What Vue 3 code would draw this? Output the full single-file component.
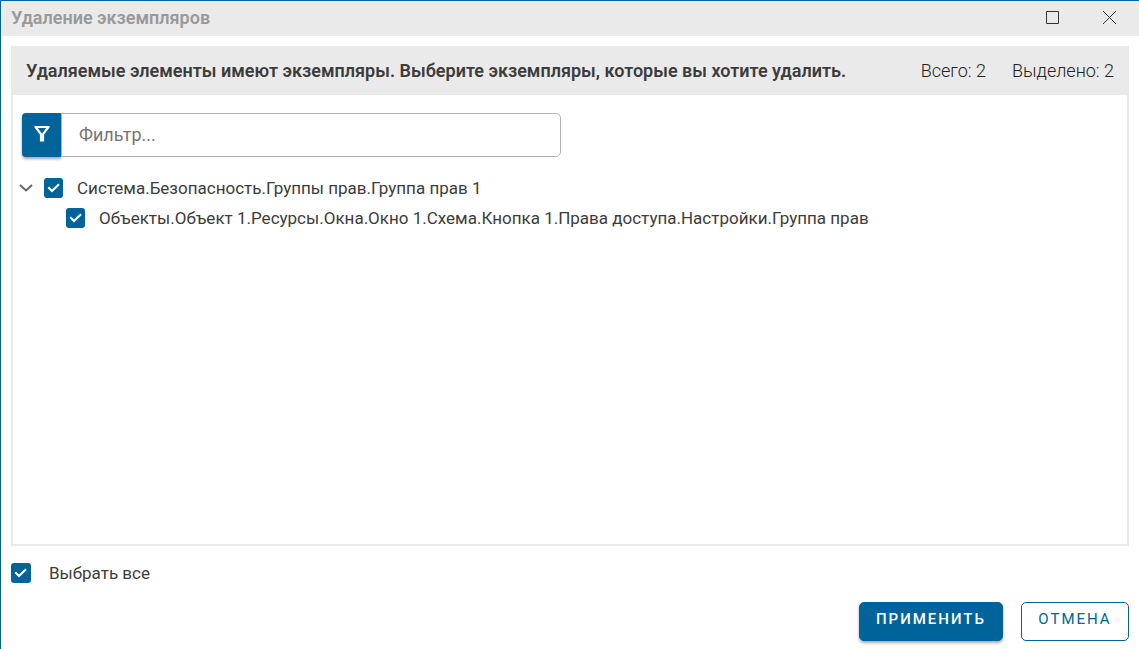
<script setup>
import { ref, computed } from 'vue'

const filter = ref('')
const expanded = ref(true)
const items = ref([
  { id: 'group', level: 0, checked: true, label: 'Система.Безопасность.Группы прав.Группа прав 1' },
  { id: 'settings', level: 1, checked: true, label: 'Объекты.Объект 1.Ресурсы.Окна.Окно 1.Схема.Кнопка 1.Права доступа.Настройки.Группа прав' },
])

const visible = computed(() =>
  items.value.filter(
    (i) => (i.level === 0 || expanded.value) && i.label.toLowerCase().includes(filter.value.toLowerCase()),
  ),
)
const selected = computed(() => items.value.filter((i) => i.checked).length)
const all = computed({
  get: () => selected.value === items.value.length,
  set: (v) => items.value.forEach((i) => (i.checked = v)),
})
</script>

<template>
  <div class="dialog" role="dialog" aria-labelledby="dialog-title">
    <header class="titlebar">
      <h1 id="dialog-title">Удаление экземпляров</h1>
      <div class="window-buttons">
        <button type="button" aria-label="Развернуть">
          <svg width="13" height="13" viewBox="0 0 13 13"><path d="M.5.5h12v12H.5z" /></svg>
        </button>
        <button type="button" aria-label="Закрыть">
          <svg width="13" height="13" viewBox="0 0 13 13"><path d="M0 0l13 13M13 0L0 13" /></svg>
        </button>
      </div>
    </header>

    <main class="content">
      <section class="panel">
        <div class="panel-head">
          <h2>Удаляемые элементы имеют экземпляры. Выберите экземпляры, которые вы хотите удалить.</h2>
          <span>Всего: {{ items.length }}</span>
          <span>Выделено: {{ selected }}</span>
        </div>
        <div class="panel-body">
          <div class="filter">
            <button type="button" aria-label="Фильтр">
              <svg width="16" height="16" viewBox="0 0 16 16"><path d="M.5 0h15v1.6L10.1 8.6V15.5H5.9V8.6L.5 1.6z M3.7 2L8 7.7 12.3 2z" fill-rule="evenodd" /></svg>
            </button>
            <input v-model="filter" type="text" placeholder="Фильтр..." aria-label="Фильтр" />
          </div>
          <ul class="tree">
            <li v-for="item in visible" :key="item.id" :class="{ child: item.level }">
              <button v-if="!item.level" type="button" class="toggle" aria-label="Свернуть" @click="expanded = !expanded">
                <svg width="14" height="8" viewBox="0 0 14 8"><path d="M1 1l6 5.5L13 1" /></svg>
              </button>
              <label>
                <span class="check">
                  <input v-model="item.checked" type="checkbox" />
                  <svg width="20" height="20" viewBox="0 0 20 20"><path d="M4.3 9.3L8 13l7-6.8" /></svg>
                </span>
                {{ item.label }}
              </label>
            </li>
          </ul>
        </div>
      </section>

      <label class="select-all">
        <span class="check">
          <input v-model="all" type="checkbox" />
          <svg width="20" height="20" viewBox="0 0 20 20"><path d="M4.3 9.3L8 13l7-6.8" /></svg>
        </span>
        Выбрать все
      </label>

      <footer class="actions">
        <button type="button" class="primary">Применить</button>
        <button type="button" class="secondary">Отмена</button>
      </footer>
    </main>
  </div>
</template>

<style>
body {
  margin: 0;
}
</style>

<style scoped>
* {
  box-sizing: border-box;
}
.dialog {
  display: flex;
  flex-direction: column;
  min-height: 100vh;
  border: solid #006399;
  border-width: 1px 0 0 1px;
  background: #fff;
  color: #3c3c3c;
  font: 400 17px/24px Roboto, "Noto Sans", sans-serif;
}
button,
input {
  margin: 0;
  padding: 0;
  font: inherit;
}
.titlebar {
  display: flex;
  align-items: center;
  justify-content: space-between;
  height: 35px;
  padding: 0 23px 2px 10px;
  background: #eaeaea;
}
h1,
h2 {
  margin: 0;
  font-size: 18px;
  line-height: 24px;
  font-weight: 600;
}
h1 {
  color: #999;
}
.window-buttons {
  display: flex;
  gap: 44px;
}
.window-buttons button {
  display: flex;
  border: 0;
  background: none;
}
.window-buttons path {
  fill: none;
  stroke: #333;
}
.content {
  display: flex;
  flex: 1;
  flex-direction: column;
  padding: 10px 10px 8px;
}
.panel {
  display: flex;
  flex: 1;
  flex-direction: column;
  border: 2px solid #eaeaea;
  border-top: 0;
}
.panel-head {
  display: flex;
  align-items: center;
  gap: 26px;
  min-height: 49px;
  padding: 0 13px;
  background: #eaeaea;
}
h2 {
  flex: 1;
}
.panel-head span {
  color: #222;
  font-size: 18px;
  font-weight: 300;
}
.panel-body {
  padding: 18px 9px;
}
.filter {
  display: flex;
  max-width: 539px;
  height: 44px;
}
.filter button {
  display: flex;
  align-items: center;
  justify-content: center;
  width: 39px;
  padding-bottom: 2px;
  border: 0;
  border-radius: 4px 0 0 4px;
  background: #006399;
  box-shadow: 0 2px 3px rgba(0, 0, 0, 0.35);
}
.filter path {
  fill: #fff;
}
.filter input {
  flex: 1;
  min-width: 0;
  padding: 0 17px;
  border: 1px solid #b3b3b3;
  border-radius: 0 5px 5px 0;
  background: #fff;
  color: inherit;
  font-size: 18px;
  outline: none;
}
.filter input::placeholder {
  color: #757575;
  opacity: 1;
}
.tree {
  margin: 16px 0 0;
  padding: 0;
  list-style: none;
}
.tree li {
  display: flex;
  align-items: center;
  min-height: 30px;
}
.tree .child {
  padding-left: 44px;
}
.toggle {
  display: flex;
  justify-content: center;
  width: 14px;
  margin: 0 11px 0 -3px;
  border: 0;
  background: none;
}
.toggle path {
  fill: none;
  stroke: #666;
  stroke-width: 2;
}
label {
  display: flex;
  align-items: center;
  gap: 14px;
}
.check {
  position: relative;
  flex: none;
  width: 20px;
  height: 20px;
}
.tree .check {
  width: 19px;
}
.check input {
  display: block;
  appearance: none;
  width: 100%;
  height: 100%;
  border: 2px solid #006399;
  border-radius: 3px;
  background: #fff;
}
.check input:checked {
  background: #006399;
}
.check svg {
  position: absolute;
  top: 0;
  left: 0;
  pointer-events: none;
}
.check path {
  fill: none;
  stroke: #fff;
  stroke-width: 2;
}
.select-all {
  gap: 18px;
  margin-top: 15px;
}
.actions {
  display: flex;
  justify-content: flex-end;
  gap: 18px;
  margin-top: 17px;
}
.actions button {
  min-width: 108px;
  height: 39px;
  padding: 0 16px 5px;
  border: 1px solid #006399;
  border-radius: 5px;
  font-size: 15px;
  letter-spacing: 2px;
  text-transform: uppercase;
}
.actions .primary {
  background: #006399;
  color: #fff;
  font-weight: 500;
  box-shadow: 0 2px 3px rgba(0, 0, 0, 0.35);
}
.actions .secondary {
  background: #fff;
  color: #006399;
  font-weight: 400;
}
</style>
